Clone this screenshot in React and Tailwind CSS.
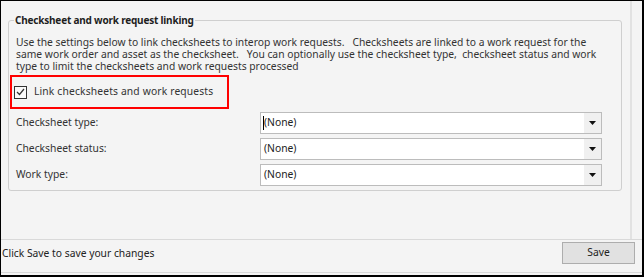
import React from 'react'

const font = { fontFamily: '"Noto Sans", "Open Sans", sans-serif' }

function Select({ caret }) {
  return (
    <div className="w-[342px] h-[22px] border border-[#bcbcbc] bg-white flex items-stretch">
      <div className="flex-1 flex items-center pl-[3px] text-[10.3px] text-[#222] relative">
        {caret && <span className="absolute left-[2px] top-[3px] w-[1px] h-[14px] bg-black" />}
        (None)
      </div>
      <div className="w-[17px] bg-[#f0f0f0] flex items-center justify-center">
        <svg width="7" height="4" viewBox="0 0 7 4"><path d="M0 0h7L3.5 4z" fill="#111" /></svg>
      </div>
    </div>
  )
}

function Row({ label, caret }) {
  return (
    <div className="flex items-center h-[22px]">
      <div className="w-[251px] pl-[7px] text-[10.3px] text-[#333]">{label}</div>
      <Select caret={caret} />
    </div>
  )
}

export default function App() {
  return (
    <div className="w-[644px] h-[277px] bg-[#f4f4f4] border-t border-l border-r-2 border-b-2 border-black flex flex-col" style={font}>
      <div className="h-[238px] flex">
        <div className="w-[631px] border-r-2 border-[#e2e2e2] pt-[12px] pl-[7px]">
          <fieldset className="w-[614px] h-[178px] border border-[#cfcfcf] rounded-[3px] px-0 pb-0">
            <legend className="ml-[5px] px-[1px] text-[10px] leading-[14px] font-bold tracking-[-0.2px] text-[#1e1e1e]">Checksheet and work request linking</legend>
            <div className="pl-[7px] pt-[9px] text-[10.3px] leading-[12px] text-[#333] whitespace-pre">
              {'Use the settings below to link checksheets to interop work requests.   Checksheets are linked to a work request for the\nsame work order and asset as the checksheet.   You can optionally use the checksheet type,  checksheet status and work\ntype to limit the checksheets and work requests processed'}
            </div>
            <div className="ml-[1px] mt-[3px] w-[219px] h-[34px] border-2 border-[#ff0000] flex items-center pl-[2px] gap-[7px]">
              <div className="w-[13px] h-[13px] border border-[#333] bg-[#fafafa] flex items-center justify-center">
                <svg width="9" height="8" viewBox="0 0 9 8"><path d="M1 4l2.5 2.5L8 1" fill="none" stroke="#333" strokeWidth="1.2" /></svg>
              </div>
              <span className="text-[10.3px] tracking-[0.15px] text-[#333]">Link checksheets and work requests</span>
            </div>
            <div className="mt-[3px] flex flex-col gap-[4px]">
              <Row label="Checksheet type:" caret />
              <Row label="Checksheet status:" />
              <Row label="Work type:" />
            </div>
          </fieldset>
        </div>
        <div className="flex-1" />
      </div>
      <div className="h-[34px] border-t border-b border-[#d9d9d9] flex items-start justify-between pt-[2px] pr-[7px]">
        <span className="pl-[1px] text-[10.3px] leading-[22px] text-[#222]">Click Save to save your changes</span>
        <button className="w-[73px] h-[22px] border border-[#adadad] bg-[#e1e1e1] text-[10.3px] text-[#222]">Save</button>
      </div>
    </div>
  )
}
